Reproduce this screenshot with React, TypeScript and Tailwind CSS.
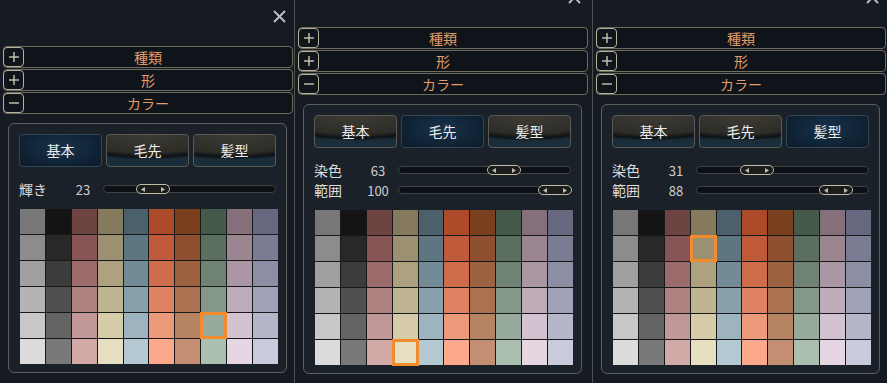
import React from 'react';

const COLS = [
  ['#777777', '#8c8c8c', '#a0a0a0', '#b4b4b4', '#c8c8c8', '#dcdcdc'],
  ['#141414', '#282828', '#3c3c3c', '#505050', '#646464', '#787878'],
  ['#6e4443', '#875556', '#9c6b6b', '#ae8281', '#c19798', '#d3a9a8'],
  ['#857a5d', '#9b9072', '#ada17f', '#c0b593', '#d6cca9', '#e7dfc1'],
  ['#4b606b', '#5e7682', '#728b97', '#88a0ab', '#9db3bd', '#b4c8d1'],
  ['#ad4a2a', '#bf5a3a', '#cf6c4b', '#de8262', '#ec9a7a', '#fca88a'],
  ['#7a3f1d', '#8d512f', '#9d6240', '#aa7250', '#b68463', '#c48e72'],
  ['#465a4b', '#5b6f61', '#6f8274', '#849788', '#97aa9b', '#abbfb0'],
  ['#846f7b', '#9a8591', '#ab97a4', '#bfacb9', '#d3c2cf', '#e6d6e1'],
  ['#666880', '#797c93', '#8c8ea4', '#a0a2b8', '#b5b6ca', '#c9cadc'],
];

const TABS = ['基本', '毛先', '髪型'];

type Slider = { label: string; value: number };

function SignBox({ open }: { open: boolean }) {
  return (
    <span className="ml-[-1px] flex h-[20px] w-[21px] shrink-0 items-center justify-center rounded-[4px] border border-[#b5b19a] bg-[#10151c]">
      <svg width="12" height="12" viewBox="0 0 12 12">
        <line x1="1" y1="6" x2="11" y2="6" stroke="#c9c6b2" strokeWidth="1.4" />
        {!open && <line x1="6" y1="1" x2="6" y2="11" stroke="#c9c6b2" strokeWidth="1.4" />}
      </svg>
    </span>
  );
}

function Row({ label, open }: { label: string; open: boolean }) {
  return (
    <div className="flex h-[22px] items-center rounded-[4px] border border-[#6c6b5c] bg-[#0f141b]">
      <SignBox open={open} />
      <span className="flex-1 pr-[20px] text-center text-[14px] leading-none text-[#e39c68]">{label}</span>
    </div>
  );
}

function SliderRow({ label, value }: Slider) {
  return (
    <div className="flex h-[20px] items-center">
      <span className="w-[44px] text-[14px] leading-none text-[#dcdcdc]">{label}</span>
      <span className="w-[40px] text-center text-[13px] leading-none text-[#cfcfcf]">{value}</span>
      <div className="relative h-[8px] flex-1 rounded-full border border-[#3e4345] bg-[#0c1014]">
        <div
          className="absolute top-[-2px] flex h-[10px] w-[34px] items-center justify-between rounded-full border border-[#c2bda2] bg-[#1c1e1e] px-[4px]"
          style={{ left: value * 1.39 }}
        >
          <svg width="4" height="5" viewBox="0 0 4 5">
            <polygon points="4,0 0,2.5 4,5" fill="#bdbab0" />
          </svg>
          <svg width="4" height="5" viewBox="0 0 4 5">
            <polygon points="0,0 4,2.5 0,5" fill="#bdbab0" />
          </svg>
        </div>
      </div>
    </div>
  );
}

function Panel({
  active,
  sliders,
  selected,
  shifted,
}: {
  active: number;
  sliders: Slider[];
  selected: [number, number];
  shifted?: boolean;
}) {
  return (
    <div
      className={
        'flex h-[420px] w-[298px] shrink-0 flex-col border-l border-[#4a4f51] bg-[#161b23] ' +
        (shifted ? 'mt-[-19px]' : '')
      }
    >
      <div className="flex h-[23px] items-end justify-end pr-[11px]">
        <svg width="13" height="13" viewBox="0 0 13 13">
          <line x1="1" y1="1" x2="12" y2="12" stroke="#c4c4c4" strokeWidth="1.8" />
          <line x1="12" y1="1" x2="1" y2="12" stroke="#c4c4c4" strokeWidth="1.8" />
        </svg>
      </div>
      <div className="ml-[3px] mt-[23px] flex w-[290px] flex-col gap-[1px]">
        <Row label="種類" open={false} />
        <Row label="形" open={false} />
        <Row label="カラー" open />
      </div>
      <div className="ml-[8px] mt-[9px] w-[279px] rounded-[6px] border border-[#5d605a] bg-[#1b2129] px-[10px] pb-[8px] pt-[10px]">
        <div className="grid grid-cols-3 gap-[4px]">
          {TABS.map((t, i) => (
            <div
              key={t}
              className={
                'flex h-[33px] items-center justify-center rounded-[4px] border text-[14px] text-[#ececec] ' +
                (i === active
                  ? 'border-[#2f4657] bg-[radial-gradient(ellipse_at_50%_40%,#17324a_0%,#0f2233_70%,#0c1a27_100%)]'
                  : 'border-[#5a5b54] bg-[radial-gradient(ellipse_120%_75%_at_50%_5%,#3b3a33_0%,#2d2c27_70%,#0e1215_88%,#1a2d3a_100%)]')
              }
            >
              {t}
            </div>
          ))}
        </div>
        <div className="mt-[12px] flex flex-col">
          {sliders.map((s) => (
            <SliderRow key={s.label} {...s} />
          ))}
        </div>
        <div className="ml-[1px] mt-[10px] grid h-[155px] w-[258px] grid-cols-10 grid-rows-6 gap-px bg-[#16181a]">
          {Array.from({ length: 6 }).map((_, r) =>
            COLS.map((col, c) => (
              <div key={r + '-' + c} className="relative" style={{ background: col[r] }}>
                {selected[0] === c && selected[1] === r && (
                  <span className="absolute inset-[-1px] border-[3px] border-[#f28a2e]" />
                )}
              </div>
            ))
          )}
        </div>
      </div>
    </div>
  );
}

export default function App() {
  return (
    <div className="flex h-[383px] w-[887px] overflow-hidden bg-[#161b23] font-['Noto_Sans_CJK_JP',sans-serif]">
      <div className="w-[294px] shrink-0 overflow-hidden">
        <div className="ml-[-1px]">
          <Panel active={0} sliders={[{ label: '輝き', value: 23 }]} selected={[7, 4]} />
        </div>
      </div>
      <Panel
        active={1}
        shifted
        sliders={[
          { label: '染色', value: 63 },
          { label: '範囲', value: 100 },
        ]}
        selected={[3, 5]}
      />
      <Panel
        active={2}
        shifted
        sliders={[
          { label: '染色', value: 31 },
          { label: '範囲', value: 88 },
        ]}
        selected={[3, 1]}
      />
    </div>
  );
}
